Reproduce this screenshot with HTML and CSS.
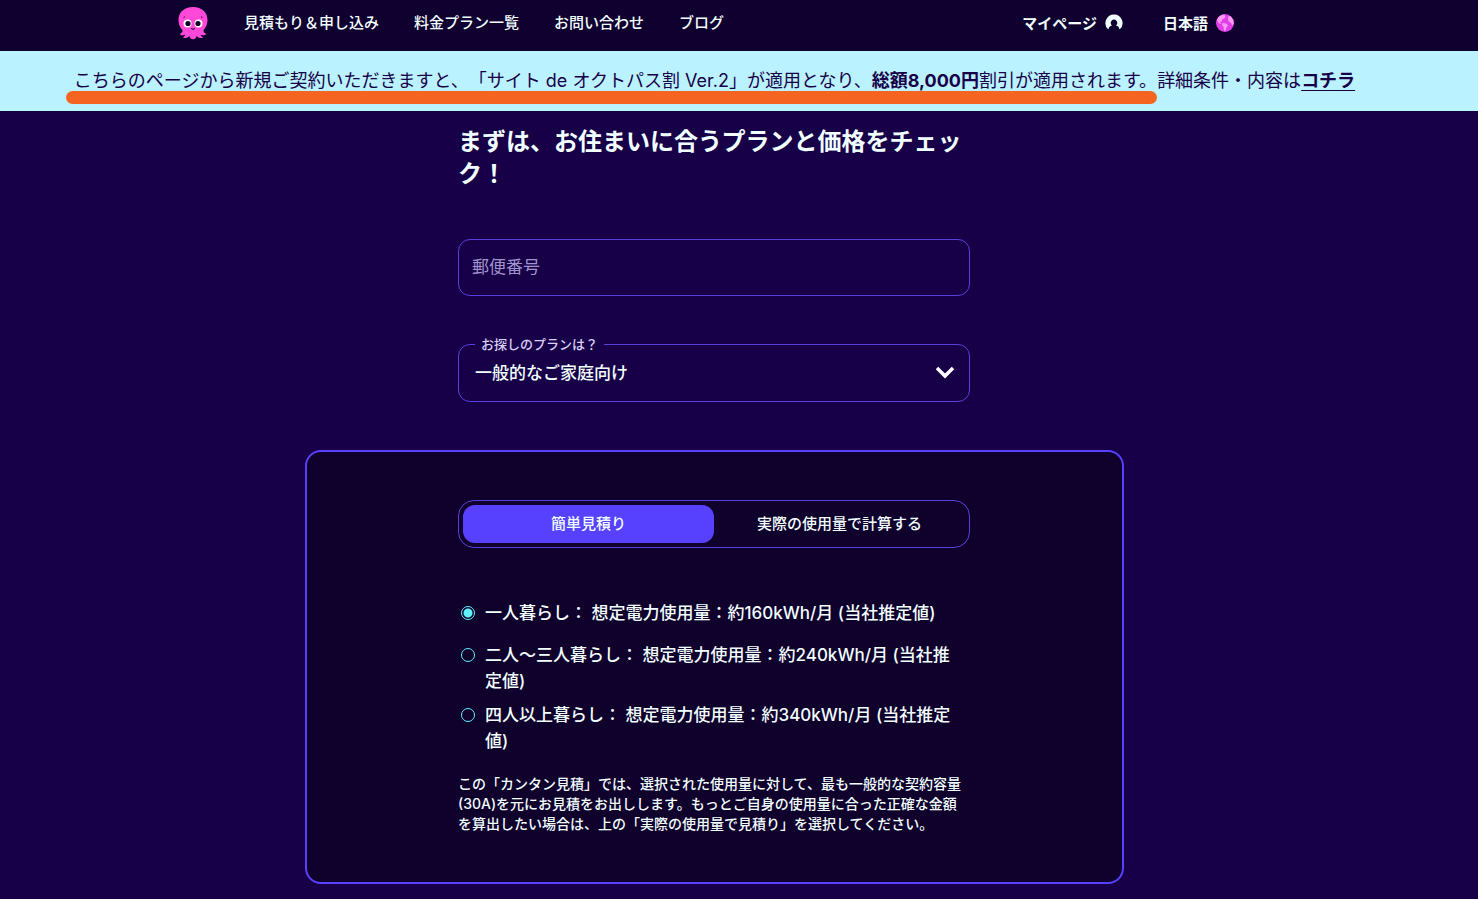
FILE: index.html
```html
<!DOCTYPE html>
<html lang="ja">
<head>
<meta charset="UTF-8">
<meta name="viewport" content="width=device-width, initial-scale=1.0">
<title>料金シミュレーション</title>
<link rel="stylesheet" href="styles.css">
</head>
<body>
<header class="header">
    <div class="header-inner">
        <a class="logo" href="#" aria-label="ホーム">
            <svg width="30" height="34" viewBox="0 0 30 34">
                <path fill="#ff48d8" d="M15 1C6 1 0.500 6.500 0.500 14c0 4.500 1.500 7.500 4 10 .6 2-1.200 3.200-2.700 4 .8 1.500 3.700 1.600 5.600.8-.4 1.200-1.400 2-2.400 2.600 2 1.200 5 .2 6.400-1.500.4 1.800 1.400 3.400 3.600 3.400s3.200-1.600 3.600-3.400c1.400 1.700 4.400 2.700 6.400 1.500-1-.6-2-1.400-2.400-2.600 1.900.8 4.800.7 5.600-.8-1.500-.8-3.300-2-2.700-4 2.500-2.500 4-5.500 4-10C29.500 6.500 24 1 15 1z"/>
                <circle cx="9.500" cy="17.500" r="4" fill="#fff"/>
                <circle cx="20.500" cy="17.500" r="4" fill="#fff"/>
                <circle cx="10" cy="17.500" r="2.600" fill="#14002f"/>
                <circle cx="20" cy="17.500" r="2.600" fill="#14002f"/>
                <path d="M13 22.500q2 1.600 4 0" fill="none" stroke="#14002f" stroke-width="1"/>
                <path d="M5.500 11.500l1.500-.8M24.500 11.500l-1.500-.8" stroke="#14002f" stroke-width=".8"/>
            </svg>
        </a>
        <nav class="nav">
            <a href="#">見積もり＆申し込み</a>
            <a href="#">料金プラン一覧</a>
            <a href="#">お問い合わせ</a>
            <a href="#">ブログ</a>
        </nav>
        <div class="account">
            <a href="#">マイページ
                <svg width="18" height="18" viewBox="0 0 18 18">
                    <path fill="#f0ffff" d="M9 0.500A8.500 8.500 0 0 0 3.500 15.500C3.700 13 5 12 7 11.500A3.300 3.300 0 1 1 11 11.500C13 12 14.300 13 14.500 15.500A8.500 8.500 0 0 0 9 0.500z"/>
                </svg>
            </a>
            <a href="#">日本語
                <svg width="18" height="18" viewBox="0 0 18 18">
                    <circle cx="9" cy="9" r="9" fill="#e040ea"/>
                    <path fill="#ff9af2" d="M1 5.500C2.500 2.500 5 .8 8 .4l1.500 1.800-1.200 2.200-2 .8-.5 2.300-2.200.3 1.700 1.600-.6.900-2.200-1.600zM6.500 9l3.600.5 2 1.800-1.800 2.200-.8 3.300-1.500-.4-.4-3.300-1.500-1.900zM12 2.500l2.700-.2 2.500 3.500.6 4-1.600 1.700-1.200-2.700-2.500-1.200z"/>
                </svg>
            </a>
        </div>
    </div>
</header>

<div class="banner">
    <p><span class="marker">こちらのページから新規ご契約いただきますと、「サイト de オクトパス割 Ver.2」が適用となり、<strong>総額8,000円</strong>割引が適用されます。</span>詳細条件・内容は<a href="#">コチラ</a></p>
</div>

<main class="main">
    <form class="intro">
        <h1>まずは、お住まいに合うプランと価格をチェック！</h1>
        <input class="postcode" type="text" placeholder="郵便番号" aria-label="郵便番号">
        <fieldset class="plan">
            <legend><label for="plan">お探しのプランは？</label></legend>
            <select id="plan">
                <option>一般的なご家庭向け</option>
            </select>
            <svg class="chevron" width="20" height="14" viewBox="0 0 20 14">
                <path d="M2 3l8 8 8-8" fill="none" stroke="#fff" stroke-width="3.500"/>
            </svg>
        </fieldset>
    </form>

    <section class="card">
        <div class="card-inner">
            <div class="tabs">
                <button class="tab active" type="button">簡単見積り</button>
                <button class="tab" type="button">実際の使用量で計算する</button>
            </div>
            <div class="options">
                <label class="option"><input type="radio" name="usage" checked><span>一人暮らし： 想定電力使用量：約160kWh/月 (当社推定値)</span></label>
                <label class="option"><input type="radio" name="usage"><span>二人〜三人暮らし： 想定電力使用量：約240kWh/月 (当社推定値)</span></label>
                <label class="option"><input type="radio" name="usage"><span>四人以上暮らし： 想定電力使用量：約340kWh/月 (当社推定値)</span></label>
            </div>
            <p class="note">この「カンタン見積」では、選択された使用量に対して、最も一般的な契約容量(30A)を元にお見積をお出しします。もっとご自身の使用量に合った正確な金額を算出したい場合は、上の「実際の使用量で見積り」を選択してください。</p>
        </div>
    </section>
</main>
</body>
</html>
```
FILE: styles.css
```css
/* Basic styling */
* {
    box-sizing: border-box;
}
body {
    margin: 0;
    background-color: #180048;
    color: #f0ffff;
    font-family: Inter, "Noto Sans CJK JP", sans-serif;
}
input, select, button {
    font-family: inherit;
    color: inherit;
}

/* Header */
.header {
    background-color: #100030;
    padding-right: 49px;
}
.header-inner {
    display: flex;
    align-items: center;
    max-width: 1073px;
    height: 51px;
    margin: 0 auto;
    padding-right: 17px;
    padding-bottom: 6px;
}
.header a {
    color: #f0ffff;
    font-size: 15px;
    font-weight: 500;
    text-decoration: none;
    white-space: nowrap;
}
.logo {
    display: flex;
    margin-right: 36px;
}
.nav {
    display: flex;
    gap: 35px;
    padding-bottom: 2px;
}
.account {
    display: flex;
    gap: 40px;
    margin-left: auto;
}
.header .account a {
    display: flex;
    align-items: center;
    gap: 8px;
    font-weight: 700;
}

/* Campaign banner */
.banner {
    background-color: #baf3ff;
    color: #180048;
    padding: 14px 49px 14px 0;
    text-align: center;
}
.banner p {
    margin: 0;
    font-size: 18px;
    line-height: 32px;
    text-spacing-trim: space-all;
}
.banner a {
    color: inherit;
    font-weight: 700;
    text-underline-offset: 3px;
    text-decoration-thickness: 1px;
}
.marker {
    position: relative;
}
.marker::after {
    content: "";
    position: absolute;
    left: -8px;
    right: 0;
    bottom: -13px;
    height: 13px;
    border-radius: 7px;
    background-color: #f66422;
}

/* Form */
.main {
    padding: 15px 50px 15px 0;
}
.intro {
    max-width: 512px;
    margin: 0 auto;
}
h1 {
    margin: 0 0 49px;
    font-size: 24px;
    font-weight: 700;
    line-height: 32px;
}
.postcode {
    display: block;
    width: 100%;
    height: 57px;
    padding: 0 13px 2px;
    border: 1px solid #5840dc;
    border-radius: 12px;
    background-color: transparent;
    font-size: 17px;
}
.postcode::placeholder {
    color: #a094cc;
    opacity: 1;
}
.plan {
    position: relative;
    margin: 39px 0 48px;
    padding: 0;
    border: 1px solid #5840dc;
    border-radius: 12px;
}
.plan legend {
    margin-left: 16px;
    padding: 0 6px;
    color: #d8d0f8;
    font-size: 13px;
    font-weight: 500;
    line-height: 18px;
}
.plan select {
    display: block;
    width: 100%;
    height: 48px;
    padding: 0 48px 8px 16px;
    border: none;
    border-radius: 12px;
    appearance: none;
    background-color: transparent;
    font-size: 17px;
    font-weight: 500;
}
.plan option {
    background-color: #180048;
}
.chevron {
    position: absolute;
    right: 14px;
    top: 12px;
    pointer-events: none;
}

/* Estimate card */
.card {
    max-width: 819px;
    margin: 0 auto;
    padding: 48px 16px;
    border: 2px solid #5840ff;
    border-radius: 16px;
    background-color: #10002c;
}
.card-inner {
    max-width: 512px;
    margin: 0 auto;
}
.tabs {
    display: flex;
    padding: 4px;
    border: 1px solid #5840dc;
    border-radius: 16px;
}
.tab {
    flex: 1;
    height: 38px;
    padding: 0 0 4px;
    border: none;
    border-radius: 12px;
    background-color: transparent;
    font-size: 15px;
    font-weight: 500;
    cursor: pointer;
}
.tab.active {
    background-color: #5840ff;
}
.options {
    display: flex;
    flex-direction: column;
    gap: 8px;
    margin-top: 52px;
}
.option {
    display: flex;
    align-items: flex-start;
    gap: 10px;
    min-height: 34px;
    padding: 0 8px 0 3px;
    font-size: 17px;
    font-weight: 500;
    line-height: 26px;
}
.option input {
    flex: none;
    appearance: none;
    width: 14px;
    height: 14px;
    margin: 6px 0 0;
    border: 1px solid #60f0f8;
    border-radius: 50%;
}
.option input:checked {
    background: radial-gradient(circle, #60f0f8 4px, transparent 5px);
}
.note {
    margin: 20px 0 0;
    font-size: 14px;
    font-weight: 500;
    line-height: 20px;
}
```
